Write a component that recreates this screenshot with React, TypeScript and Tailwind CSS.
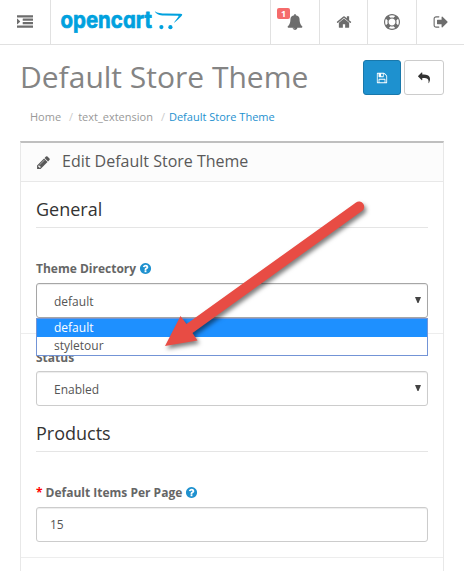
import type { ReactNode } from "react";

const ICONS = {
  indent:
    "M352 832q0 14-9 23l-288 288q-9 9-23 9-13 0-22.5-9.5t-9.5-22.5v-576q0-13 9.5-22.5t22.5-9.5q14 0 23 9l288 288q9 9 9 23zm1440 480v192q0 13-9.5 22.5t-22.5 9.5h-1728q-13 0-22.5-9.5t-9.5-22.5v-192q0-13 9.5-22.5t22.5-9.5h1728q13 0 22.5 9.5t9.5 22.5zm0-384v192q0 13-9.5 22.5t-22.5 9.5h-1088q-13 0-22.5-9.5t-9.5-22.5v-192q0-13 9.5-22.5t22.5-9.5h1088q13 0 22.5 9.5t9.5 22.5zm0-384v192q0 13-9.5 22.5t-22.5 9.5h-1088q-13 0-22.5-9.5t-9.5-22.5v-192q0-13 9.5-22.5t22.5-9.5h1088q13 0 22.5 9.5t9.5 22.5zm0-384v192q0 13-9.5 22.5t-22.5 9.5h-1728q-13 0-22.5-9.5t-9.5-22.5v-192q0-13 9.5-22.5t22.5-9.5h1728q13 0 22.5 9.5t9.5 22.5z",
  bell: "M912 1696q0-16-16-16-59 0-101.5-42.5t-42.5-101.5q0-16-16-16t-16 16q0 73 51.5 124.5t124.5 51.5q16 0 16-16zm816-288q0 52-38 90t-90 38h-448q0 106-75 181t-181 75-181-75-75-181h-448q-52 0-90-38t-38-90q50-42 91-88t85-119.5 74.5-158.5 50-206 19.5-260q0-152 117-282.5t307-158.5q-8-19-8-39 0-40 28-68t68-28 68 28 28 68q0 20-8 39 190 28 307 158.5t117 282.5q0 139 19.5 260t50 206 74.5 158.5 85 119.5 91 88z",
  home: "M1472 992v480q0 26-19 45t-45 19h-384v-384h-256v384h-384q-26 0-45-19t-19-45v-480q0-1 .5-3t.5-3l575-474 575 474q1 2 1 6zm223-69l-62 74q-8 9-21 11h-3q-13 0-21-7l-692-577-692 577q-12 8-24 7-13-2-21-11l-62-74q-8-10-7-23.5t11-21.5l719-599q32-26 76-26t76 26l244 204v-195q0-14 9-23t23-9h192q14 0 23 9t9 23v408l219 182q10 8 11 21.5t-7 23.5z",
  ring: "M896 0q182 0 348 71t286 191 191 286 71 348-71 348-191 286-286 191-348 71-348-71-286-191-191-286-71-348 71-348 191-286 286-191 348-71zm0 128q-190 0-361 90l194 194q82-28 167-28t167 28l194-194q-171-90-361-90zm-678 1129l194-194q-28-82-28-167t28-167l-194-194q-90 171-90 361t90 361zm678 407q190 0 361-90l-194-194q-82 28-167 28t-167-28l-194 194q171 90 361 90zm0-384q159 0 271.5-112.5t112.5-271.5-112.5-271.5-271.5-112.5-271.5 112.5-112.5 271.5 112.5 271.5 271.5 112.5zm484-217l194 194q90-171 90-361t-90-361l-194 194q28 82 28 167t-28 167z",
  signOut:
    "M704 1440q0 4 1 20t.5 26.5-3 23.5-10 19.5-20.5 6.5h-320q-119 0-203.5-84.5t-84.5-203.5v-704q0-119 84.5-203.5t203.5-84.5h320q13 0 22.5 9.5t9.5 22.5q0 4 1 20t.5 26.5-3 23.5-10 19.5-20.5 6.5h-320q-66 0-113 47t-47 113v704q0 66 47 113t113 47h312l11.5 1 11.5 3 8 5.5 7 9 2 13.5zm928-544q0 26-19 45l-544 544q-19 19-45 19t-45-19-19-45v-288h-448q-26 0-45-19t-19-45v-384q0-26 19-45t45-19h448v-288q0-26 19-45t45-19 45 19l544 544q19 19 19 45z",
  save: "M512 1536h768v-384h-768v384zm896 0h128v-896q0-14-10-38.5t-20-34.5l-281-281q-10-10-34-20t-39-10v416q0 40-28 68t-68 28h-576q-40 0-68-28t-28-68v-416h-128v1280h128v-416q0-40 28-68t68-28h832q40 0 68 28t28 68v416zm-384-928v-320q0-13-9.5-22.5t-22.5-9.5h-192q-13 0-22.5 9.5t-9.5 22.5v320q0 13 9.5 22.5t22.5 9.5h192q13 0 22.5-9.5t9.5-22.5zm640 32v928q0 40-28 68t-68 28h-1344q-40 0-68-28t-28-68v-1344q0-40 28-68t68-28h928q40 0 88 20t76 48l280 280q28 28 48 76t20 88z",
  reply:
    "M1792 1120q0 166-127 451-3 7-10.5 24t-13.5 30-13 22q-12 17-28 17-15 0-23.5-10t-8.5-25q0-9 2.5-26.5t2.5-23.5q5-68 5-123 0-101-17.5-181t-48.5-138.5-80-101-105.5-69.5-133-42.5-154-21.5-175.5-6h-224v256q0 26-19 45t-45 19-45-19l-512-512q-19-19-19-45t19-45l512-512q19-19 45-19t45 19 19 45v256h224q713 0 875 403 53 134 53 333z",
  pencil:
    "M491 1536l91-91-235-235-91 91v107h128v128h107zm523-928q0-22-22-22-10 0-17 7l-542 542q-7 7-7 17 0 22 22 22 10 0 17-7l542-542q7-7 7-17zm-54-192l416 416-832 832h-416v-416zm683 96q0 53-37 90l-166 166-416-416 166-165q36-38 90-38 53 0 91 38l235 234q37 39 37 91z",
  help: "M1024 1376v-192q0-14-9-23t-23-9h-192q-14 0-23 9t-9 23v192q0 14 9 23t23 9h192q14 0 23-9t9-23zm256-672q0-88-55.5-163t-138.5-116-170-41q-243 0-371 213-15 24 8 42l132 100q7 6 19 6 16 0 25-12 53-68 86-92 34-24 86-24 48 0 85.5 26t37.5 59q0 38-20 61t-68 45q-63 28-115.5 86.5t-52.5 125.5v36q0 14 9 23t23 9h192q14 0 23-9t9-23q0-19 21.5-49.5t54.5-49.5q32-18 49-28.5t46-35 44.5-48 28-60.5 12.5-81zm384 192q0 209-103 385.5t-279.5 279.5-385.5 103-385.5-103-279.5-279.5-103-385.5 103-385.5 279.5-279.5 385.5-103 385.5 103 279.5 279.5 103 385.5z",
};

function Icon({ name, className }: { name: keyof typeof ICONS; className: string }) {
  return (
    <svg viewBox="0 0 1792 1792" fill="currentColor" className={`shrink-0 ${className}`}>
      <path d={ICONS[name]} />
    </svg>
  );
}

function Logo() {
  return (
    <svg
      width="128"
      height="40"
      viewBox="58 2 128 40"
      className="ml-[7px] mt-[2px] shrink-0 text-[#00a1de]"
      fill="currentColor"
    >
      <text
        x="60.5"
        y="27.5"
        textLength="91.5"
        lengthAdjust="spacingAndGlyphs"
        stroke="currentColor"
        strokeWidth="0.7"
        strokeLinejoin="round"
        className="font-['Inter',sans-serif] text-[23.5px] font-bold [font-feature-settings:'cv11']"
      >
        opencart
      </text>
      <path d="M154.800 11.300C157.500 13.200 161 13.500 166 13.600L180.500 13.700C182.600 13.700 182.700 14.700 181.300 16.200C179.500 18.200 177 20.600 173.800 23C175.600 20.300 177.200 18.300 178.300 16.800C178.800 16.100 178.500 15.800 177.600 15.800L164 15.600C159.500 15.500 156.500 14.600 154.800 11.300z" />
      <circle cx="161.400" cy="27.100" r="2.100" />
      <circle cx="170.400" cy="27.200" r="2.100" />
    </svg>
  );
}

function NavItem({ children, className }: { children: ReactNode; className: string }) {
  return <a className={`relative flex h-11 items-center justify-center border-l border-[#e1e1e1] ${className}`}>{children}</a>;
}

function Label({ children }: { children: ReactNode }) {
  return <label className="flex h-[17px] items-center text-[12px] font-bold leading-[17px] text-[#666]">{children}</label>;
}

function Select({ value, className }: { value: string; className: string }) {
  return (
    <div
      className={`flex h-[35px] items-center justify-between rounded-[3px] border pl-[17px] pr-[6px] pt-[2px] shadow-[inset_0_1px_1px_rgba(0,0,0,0.075)] ${className}`}
    >
      <span>{value}</span>
      <svg width="6" height="6" viewBox="0 0 6 6" className="mb-1 text-[#444]" fill="currentColor">
        <path d="M0 0h6L3.500 6h-1z" />
      </svg>
    </div>
  );
}

export default function App() {
  return (
    <div className="relative h-[571px] w-[464px] overflow-hidden bg-white font-['Open_Sans',sans-serif] text-[12px] text-[#555]">
      <header className="flex h-[45px] border-b border-[#e1e1e1] text-[#6d6d6d]">
        <div className="flex w-[51px] shrink-0 items-center justify-center border-r border-[#e1e1e1]">
          <Icon name="indent" className="size-4" />
        </div>
        <Logo />
        <nav className="ml-auto flex">
          <NavItem className="w-[49px]">
            <Icon name="bell" className="size-4" />
            <span className="absolute left-[6px] top-2 h-[11px] w-[13px] rounded-[2px] bg-[#f56b6b] text-center text-[9px] font-bold leading-[11px] text-white">
              1
            </span>
          </NavItem>
          <NavItem className="w-12">
            <Icon name="home" className="size-4" />
          </NavItem>
          <NavItem className="w-[49px]">
            <Icon name="ring" className="size-4" />
          </NavItem>
          <NavItem className="w-12">
            <Icon name="signOut" className="size-4" />
          </NavItem>
        </nav>
      </header>

      <section className="flex h-[96px] justify-between pl-5 pr-5 pt-[15px]">
        <div>
          <h1 className="whitespace-nowrap text-[30px] leading-[33px] text-[#848484]">Default Store Theme</h1>
          <nav className="ml-[10px] mt-[15px] flex whitespace-nowrap text-[11px] leading-[18px] text-[#999]">
            <span>Home</span>
            <span className="ml-2 mr-[5px] text-[#ccc]">/</span>
            <span>text_extension</span>
            <span className="ml-2 mr-1 text-[#ccc]">/</span>
            <span className="text-[#1e91cf]">Default Store Theme</span>
          </nav>
        </div>
        <div className="flex gap-[3px]">
          <button className="flex h-[35px] w-[38px] items-center justify-center rounded-[3px] border border-[#1978ab] bg-[#1e91cf] text-white">
            <Icon name="save" className="size-3" />
          </button>
          <button className="flex h-[35px] w-10 items-center justify-center rounded-[3px] border border-[#ccc] text-[#333]">
            <Icon name="reply" className="size-3" />
          </button>
        </div>
      </section>

      <main className="mx-5 h-[431px] border-x border-t-2 border-[#e8e8e8] border-t-[#bfbfbf]">
        <div className="flex h-[39px] items-center border-b border-[#e8e8e8] bg-[#fcfcfc] pl-[15px] text-[16px] leading-[20px] text-[#595959]">
          <Icon name="pencil" className="mr-[11px] size-[15px]" />
          <span className="-mt-[3px]">Edit Default Store Theme</span>
        </div>
        <div className="px-[15px] pt-[15px]">
          <h2 className="h-[31px] border-b border-[#e5e5e5] text-[18px] leading-[25px] text-[#333]">General</h2>
        </div>
        <section className="h-[106px] border-b border-[#ededed] px-[15px] pt-[32px]">
          <Label>
            Theme Directory
            <Icon name="help" className="ml-[3px] size-[13px] text-[#1e91cf]" />
          </Label>
          <div className="relative mt-[6px]">
            <Select value="default" className="border-[#a6a6a6]" />
            <ul className="absolute inset-x-0 top-[35px] z-10 h-[38px] border border-[#7394d6] bg-white">
              <li className="h-[18px] bg-[#1e90ff] pl-[17px] leading-[18px] text-white">default</li>
              <li className="h-[18px] pl-[17px] leading-[18px]">styletour</li>
            </ul>
          </div>
        </section>
        <section className="px-[15px] pt-[15px]">
          <Label>Status</Label>
          <Select value="Enabled" className="mt-[5px] border-[#ccc]" />
          <h2 className="mt-[15px] h-[31px] border-b border-[#e5e5e5] text-[18px] leading-[25px] text-[#333]">Products</h2>
        </section>
        <section className="h-[106px] border-b border-[#ededed] px-[15px] pt-[32px]">
          <Label>
            <span className="mr-[3px] text-[#f00]">*</span>
            Default Items Per Page
            <Icon name="help" className="ml-[3px] size-[13px] text-[#1e91cf]" />
          </Label>
          <div className="mt-[6px] flex h-[35px] items-center rounded-[3px] border border-[#ccc] pl-[13px] shadow-[inset_0_1px_1px_rgba(0,0,0,0.075)]">
            15
          </div>
        </section>
      </main>

      <svg
        width="220"
        height="170"
        viewBox="155 190 220 170"
        className="absolute left-[155px] top-[190px] z-20 drop-shadow-[2px_3px_2px_rgba(0,0,0,0.5)]"
      >
        <path d="M356 202.500A5.200 5.200 0 0 1 362 211L192.500 333l5 7.500L165 346l15.500-30 6 8z" fill="#e84c44" />
      </svg>
    </div>
  );
}
